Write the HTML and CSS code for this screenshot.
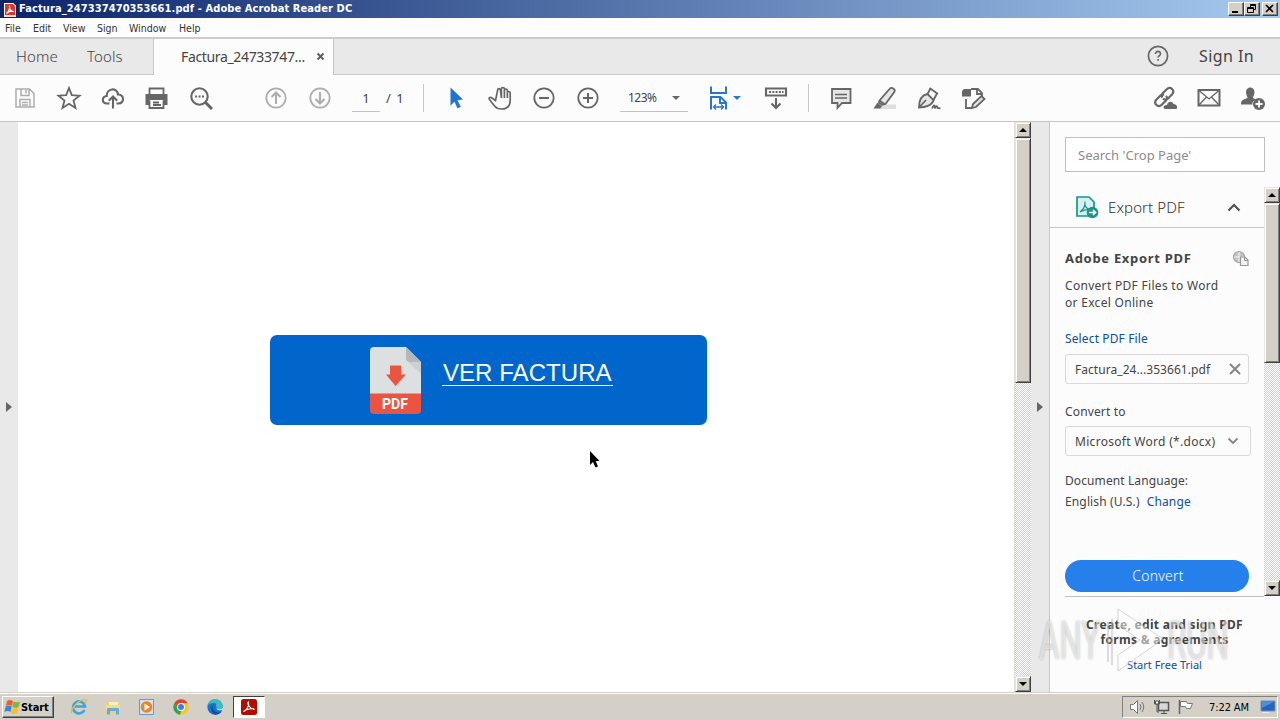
FILE: index.html
```html
<!DOCTYPE html>
<html lang="en">
  <head>
    <title>Factura_247337470353661.pdf - Adobe Acrobat Reader DC</title>
    <meta charset="utf-8">
    <link rel="stylesheet" href="styles.css">
  </head>
  <body>
    <header class="titlebar">
      <svg class="app-icon" width="12" height="15" viewBox="0 0 12 15"><path d="M0 1h9l3 3v11H0z" fill="#f6dcd8"/><path d="M0 1h9l3 3v8H0z" fill="#fff"/><path d="M1 2h8l2 2v9H1z" fill="#d8392f"/><path d="M2.500 11.500C5 9 6 6 5.500 3.500M5.500 6c.5 2 2 3.500 4.500 3.500C7 8.500 4.500 9.500 2.500 11.500" fill="none" stroke="#fff" stroke-width="1.100"/></svg>
      <span class="title">Factura_247337470353661.pdf - Adobe Acrobat Reader DC</span>
      <div class="win-buttons">
        <span class="btn3d"><svg width="14" height="12"><path d="M3 9h6" stroke="#000" stroke-width="2"/></svg></span>
        <span class="btn3d"><svg width="14" height="12"><path d="M5.500 4V1.500h5v5H8.500M5 2.500h6M2.500 4.500h6v5h-6zM2 5.500h7" fill="none" stroke="#000"/></svg></span>
        <span class="btn3d close"><svg width="14" height="12"><path d="M3 2l7 7M10 2L3 9" stroke="#000" stroke-width="1.600"/></svg></span>
      </div>
    </header>

    <nav class="menubar">
      <span class="m-file">File</span>
      <span class="m-edit">Edit</span>
      <span class="m-view">View</span>
      <span class="m-sign">Sign</span>
      <span class="m-window">Window</span>
      <span class="m-help">Help</span>
    </nav>

    <div class="tabs">
      <div class="tabs-left">
        <span class="t-home">Home</span>
        <span class="t-tools">Tools</span>
      </div>
      <div class="tab-active">
        <span class="tab-name">Factura_24733747...</span>
        <svg width="9" height="9"><path d="M1.500 1.500l6 6M7.500 1.500l-6 6" stroke="#606060" stroke-width="2"/></svg>
      </div>
      <div class="tabs-right">
        <svg width="22" height="22"><circle cx="11" cy="11" r="9.600" fill="none" stroke="#666" stroke-width="1.700"/><path d="M8.500 9c0-3.600 5.200-3.300 5 0-.1 1.600-2.400 1.600-2.400 3.600M11.100 14v1.800" fill="none" stroke="#666" stroke-width="1.700"/></svg>
        <span class="signin">Sign In</span>
      </div>
    </div>

    <div class="toolbar">
      <div class="group">
        <span class="tool light"><svg viewBox="0 0 26 26"><path d="M4 4h13.500L22 8.500V22H4zM9 4v6.500h8V4M14 5v3.500M8 22v-7.500h10V22M10 17.500h6M10 20h6" stroke-width="1.500"/></svg></span>
        <span class="tool"><svg viewBox="0 0 26 26"><path d="M13 3l2.800 7.200 7.700.5-6 4.800 2 7.500L13 18.800 6.500 23l2-7.500-6-4.800 7.700-.5z"/></svg></span>
        <span class="tool"><svg viewBox="0 0 26 26"><path class="bold" d="M9.500 18.500H7C1.500 18.500 1.500 11 6.700 11 6.500 3 17 2 18 9.500c6.500-.5 6.800 9 .5 9h-2M13 23.500V12M8.800 15.800L13 11.500l4.200 4.300"/></svg></span>
        <span class="tool"><svg viewBox="0 0 26 26"><path class="fill" d="M1.500 9h22v11h-4v-5h-14v5h-4z"/><path d="M5.500 9.500V3.500h14v6M5.500 15.500V23h14v-7.500M9 17.500h6M9 20h8"/></svg></span>
        <span class="tool"><svg viewBox="0 0 26 26"><circle class="bold" cx="11.500" cy="11.500" r="8.200"/><path d="M17.500 17.500L24 24" stroke-width="3"/><path d="M7 11.500h2M10.500 11.500h2M14 11.500h2" stroke-width="2"/></svg></span>
      </div>
      <div class="group nav">
        <span class="tool light"><svg viewBox="0 0 26 26"><circle cx="13" cy="13" r="9.700"/><path class="bold" d="M13 19V8M8.500 12L13 7.500l4.500 4.500"/></svg></span>
        <span class="tool light"><svg viewBox="0 0 26 26"><circle cx="13" cy="13" r="9.700"/><path class="bold" d="M13 7v11M8.500 14l4.500 4.500 4.500-4.500"/></svg></span>
      </div>
      <span class="page-input">1</span>
      <span class="page-total">/ 1</span>
      <i class="sep"></i>
      <div class="group pointer">
        <span class="tool"><svg viewBox="0 0 26 26"><path d="M7.500 2.500l12.500 12-5.700.7 3.500 6.600-3.300 1.700-3-6.800-4 4z" fill="#1f74d4" stroke="none"/></svg></span>
        <span class="tool"><svg viewBox="0 0 26 26"><path d="M8.500 15.500l-4.200-3c-1.500-.8-2.800.8-1.800 2l5 6.500c2 2.500 4 3 7 3 6 0 8.700-3.500 8.700-9V8c0-2-2.800-2-2.800 0v5V5.500c0-2-3-2-3 0V13 4c0-2-3-2-3 0v9l-1-8c-.3-2-3-1.700-2.800.3z" stroke-width="1.700"/></svg></span>
        <span class="tool"><svg viewBox="0 0 26 26"><circle cx="13" cy="13" r="9.700"/><path class="bold" d="M8 13h10"/></svg></span>
        <span class="tool"><svg viewBox="0 0 26 26"><circle cx="13" cy="13" r="9.700"/><path class="bold" d="M8 13h10M13 8v10"/></svg></span>
      </div>
      <div class="zoom"><span>123%</span><i class="caret"></i></div>
      <div class="fit">
        <svg width="20" height="26" viewBox="0 0 20 26" fill="none" stroke="#2a76c9" stroke-width="2"><path d="M2 1.500V8h15V1.500M2 24.500V12h9.500l5.500 5.500v7M11 12v6h6"/><path d="M4.500 22h10M7 19.500L4.500 22 7 24.500M12 19.500l2.500 2.500-2.500 2.500" stroke-width="1.400"/></svg>
        <i class="caret blue"></i>
      </div>
      <span class="tool dock"><svg viewBox="0 0 26 26"><path class="bold" d="M3 3.500h20v7H3zM13 13v10M8.500 18.500L13 23l4.500-4.500"/><path d="M6 7h2M9.300 7h2M12.600 7h2M15.900 7h2M19 7h1.500" stroke-width="2"/></svg></span>
      <i class="sep sep2"></i>
      <div class="group markup">
        <span class="tool"><svg viewBox="0 0 26 26"><path d="M4 4h18.500v14H14l-4.500 5v-5H4z" fill="#e6e6e6"/><path d="M7 9.500h12M7 13h12" stroke-width="1.300"/></svg></span>
        <span class="tool"><svg viewBox="0 0 26 26"><path d="M9 19.500h15V24H6z" fill="#dedede" stroke="none"/><path d="M7.500 15.500L17.500 4c2-2.500 6.500 0 4.800 3L13.500 19l-3.500.7-3-2zM7.500 15.500l5.500 4" fill="#e6e6e6"/><path class="fill" d="M5.500 17.500l4.500 4-2 2H1.500z"/></svg></span>
        <span class="tool"><svg viewBox="0 0 26 26"><path d="M3 22.500c0-6 1-12 8.500-13.500l6 6C16.500 20 10 22.500 3 22.500zM3 22.500l7-7.500" fill="#e6e6e6"/><path d="M11.500 9l3-5.500M17.500 15l3.500-6.500M13.500 3l8.500 6M16 23.500c2-5 3.500-3 2.500 0 2-4 3-2 3-.5l3 .3"/></svg></span>
        <span class="tool"><svg viewBox="0 0 26 26"><path d="M6 14v9h6M11 4h7l4 4v4M17 4v5h5"/><path class="fill" d="M2 6l2-2h7v7.500H2z"/><path d="M12 23l1-4 8.500-8 3 3-8.500 8z" fill="#e6e6e6"/></svg></span>
      </div>
      <div class="group share">
        <span class="tool"><svg viewBox="0 0 26 26"><path d="M10.500 12.500c-1.500-1.500-1-3 0-4l4-4c4-4 9 1 5.500 5l-4 4c-1.500 1.500-3.500 1.500-5 0M14 11c1.500 1.500 1 3.500 0 4.500l-4 4c-4 4-9-1-5.500-5l4-4c1-1 2.500-1 3.500-.5" stroke-width="2.200"/><path class="fill" d="M13 24c-2.500-.5-1.500-4.500 2-4 1-4 5.500-4 6.500-1 4 0 4.500 5 2.500 5z" /></svg></span>
        <span class="tool"><svg viewBox="0 0 26 26"><path d="M2.500 5h21v15.500h-21z" stroke-width="2"/><path d="M3 5.500l10 8.500 10-8.500M3 20l7.500-8M23 20l-7.500-8" stroke-width="1.300"/></svg></span>
        <span class="tool"><svg viewBox="0 0 26 26"><path class="fill" d="M6 7c0-6 8.500-6 8.500 0 0 3-1.500 4-1.500 6l3 1.500c-3 1-4 3-3.500 5H1c0-4 1-4.500 6.500-6.500C7.500 11 6 10 6 7z"/><circle cx="19" cy="19" r="6" fill="#666" stroke="none"/><path d="M15.500 19h7M19 15.500v7" stroke="#fff"/></svg></span>
      </div>
    </div>

    <main class="content">
      <div class="strip left"><i class="tri"></i></div>
      <section class="document">
        <div class="banner">
          <svg class="pdf" width="52" height="68" viewBox="0 0 52 68"><path d="M4 0h32l15 15v33H0V4q0-4 4-4z" fill="#dce0e1"/><path d="M36 0l15 15H40q-4 0-4-4z" fill="#b3b8ba"/><path d="M38 15h13v12z" fill="#ccd0d2"/><path d="M0 46.500h51V63q0 4-4 4H4q-4 0-4-4z" fill="#ea5440"/><path d="M20 18.500h11v9h5L25.500 39 16 27.500h4z" fill="#ea5440"/><text x="12" y="62" textLength="26" lengthAdjust="spacingAndGlyphs">PDF</text></svg>
          <a class="ver">VER FACTURA</a>
        </div>
        <svg class="cursor" width="12" height="18" viewBox="0 0 12 18"><path d="M1 0v14l3-3 2.500 5.500 2.500-1L6.700 10H10.500z" fill="#000"/></svg>
      </section>
      <div class="scrollbar doc-scroll">
        <span class="arrow"><i class="up"></i></span>
        <span class="thumb"></span>
        <span class="arrow end"><i class="down"></i></span>
      </div>
      <div class="strip right"><i class="tri"></i></div>

      <aside class="panel">
        <div class="search"><span>Search 'Crop Page'</span></div>
        <div class="panel-view">
          <div class="panel-body">
            <div class="export-head">
              <svg width="24" height="24" viewBox="0 0 24 24"><path d="M2 2h12l5 5v14H2z" fill="#d5f0ee" stroke="#16968c" stroke-width="1.700"/><path d="M5 17c4-3 5.500-6 5-10.500M10 10c1 3 3 4.500 6 4.500-4-.5-7 0-11 2.500" fill="none" stroke="#16968c" stroke-width="1.200"/><circle cx="17.500" cy="17.500" r="5.800" fill="#16968c"/><path d="M14 17.500h6.500M18 15l2.500 2.500L18 20" fill="none" stroke="#fff" stroke-width="1.700"/></svg>
              <span class="export-title">Export PDF</span>
              <svg class="chev" width="14" height="9"><path d="M1.500 7.500L7 2l5.500 5.500" fill="none" stroke="#505050" stroke-width="2.200"/></svg>
            </div>
            <div class="form">
              <div class="form-title"><b>Adobe Export PDF</b>
                <svg width="18" height="17"><circle cx="7" cy="7" r="5.500" fill="#c5c5c5" stroke="#a2a2a2" stroke-width="1.200"/><path d="M2 7h10M7 2v10" stroke="#f4f4f4" fill="none"/><path d="M8.500 7H13l3 3v5.500H8.500z" fill="#f2f2f2" stroke="#979797" stroke-width="1.200"/><path d="M12.500 7v3.500H16" fill="none" stroke="#979797"/></svg>
              </div>
              <p class="desc">Convert PDF Files to Word<br><span class="desc-2">or Excel Online</span></p>
              <p class="link select">Select PDF File</p>
              <div class="field file"><span class="v-file">Factura_24...353661.pdf</span><svg width="12" height="12"><path d="M1 1l10 10M11 1L1 11" stroke="#858585" stroke-width="2"/></svg></div>
              <p class="to">Convert to</p>
              <div class="field format"><span class="v-format">Microsoft Word (*.docx)</span><svg width="12" height="8"><path d="M1.500 1.500L6 6l4.500-4.500" fill="none" stroke="#858585" stroke-width="1.800"/></svg></div>
              <p class="lang">Document Language:</p>
              <p class="lang-value"><span>English (U.S.)</span><span class="link">Change</span></p>
              <div class="convert"><span>Convert</span></div>
            </div>
          </div>
          <div class="scrollbar panel-scroll">
            <span class="arrow"><i class="up"></i></span>
            <span class="thumb"></span>
            <span class="arrow end"><i class="down"></i></span>
          </div>
        </div>
        <div class="promo">
          <b class="promo-1">Create, edit and sign PDF</b>
          <b class="promo-2">forms &amp; agreements</b>
          <span class="link trial">Start Free Trial</span>
        </div>
      </aside>
    </main>

    <div class="watermark">
      <span class="wm-any">ANY</span>
      <svg width="60" height="68" viewBox="0 0 60 68"><path d="M11 2l45 30-45 32V48l22-15-22-15z" fill="#fff" fill-opacity=".5" stroke="#aaa" stroke-opacity=".5"/><path d="M1 15v40M5 12v46" stroke="#bbb" stroke-opacity=".5" stroke-width="2"/></svg>
      <span class="wm-run">RUN</span>
    </div>

    <footer class="taskbar">
      <div class="start btn3d">
        <svg width="17" height="16" viewBox="0 0 17 16"><path d="M3 2q3-2 6 0L8 7q-3-2-6 0z" fill="#e8612c"/><path d="M9.500 2.500q3 1.500 6.500 0L14.500 8q-3 1.500-6 0z" fill="#79b643"/><path d="M1.700 7.500q3-2 6 0l-1.200 5.500q-3-2-6 0z" fill="#3c86d0"/><path d="M8.300 8.500q3 1.500 6.200 0l-1.200 5.500q-3 1.500-6.300 0z" fill="#f5bf2c"/></svg>
        <b>Start</b>
      </div>
      <div class="apps">
        <svg width="18" height="18"><path d="M14.500 12A6 6 0 1 1 15 8.500H5" fill="none" stroke="#3aa6df" stroke-width="2.600"/><path d="M2 15C-1 12 10 0 16 2c1 1 0 2.500-1 4" fill="none" stroke="#e8b93c" stroke-width="1.300"/></svg>
        <svg width="18" height="18"><path d="M2 3h5l1 2h7v10H2z" fill="#eccf74"/><path d="M5 4h9v5H5z" fill="#f9f0bd"/><path d="M2 7h14v5H2z" fill="#f4dc8a"/><path d="M3 16.500V11q0-1 1-1h10q1 0 1 1v5.500h-3V13H6v3.500z" fill="#65acd8"/></svg>
        <svg width="18" height="18"><path d="M1.500 1.500h14v15h-14z" fill="#cfe3f4" stroke="#6c99c8"/><circle cx="8.500" cy="9" r="5.800" fill="#ef8222"/><path d="M6.500 5.500L12 9l-5.500 3.500z" fill="#fff"/></svg>
        <svg width="18" height="18"><circle cx="9" cy="9" r="7.700" fill="#f6c72d"/><path d="M2.300 5.200A7.700 7.700 0 0 1 15.700 5.200H9L5.700 11z" fill="#df4334"/><path d="M2.300 5.200L5.700 11 9 13l-1 3.700A7.700 7.700 0 0 1 2.300 5.200z" fill="#36a052"/><circle cx="9" cy="9" r="3.900" fill="#fff"/><circle cx="9" cy="9" r="3" fill="#3b7de0"/></svg>
        <svg width="18" height="18"><circle cx="9" cy="9" r="7.700" fill="#1277c9"/><path d="M1.500 8C3-1 16-1 16.700 8c0 4-6 4-6 2 1-1 1-5-3.200-5C4.500 5 2 6.500 1.500 8z" fill="#35bfc0"/><path d="M9.500 5C6 7 6 12 10 14c2 1 4 .5 6-1-1.500 2.500-4 3.700-7 3.700C5 15 3 9 9.500 5z" fill="#164c9b"/><path d="M10.500 10c1-1 1-3-.5-4 2 4-1 4 2 6 2 .7 4 0 5-1v-1c-2 1.500-6 1.500-6.500 0z" fill="#d8e8ee"/></svg>
        <span class="running"><svg width="16" height="16"><rect width="16" height="16" rx="2.500" fill="#b30b00"/><path d="M2.500 12.500c3-1 6-6 5-9.500-1.500 1 0 6 5.500 7.500 1.500-1.500-7-1-10.500 2z" fill="none" stroke="#fff" stroke-width="1.100"/></svg></span>
      </div>
      <div class="tray">
        <svg width="18" height="16" fill="none" stroke="#777"><path d="M1.500 5.500h3l4-4v13l-4-4h-3z" fill="#fff"/><path d="M11 5q2 3 0 6M13 3q3.500 5 0 10"/></svg>
        <svg width="18" height="16" fill="none" stroke="#555"><path d="M5.500 3.500h10v8h-10z" fill="#d8d8d8" stroke-width="1.500"/><path d="M8 14.500h6M11 12v2M1.500 1v4h5V1M4 5v8h2"/><path d="M2.500 2h3v3h-3z" fill="#fff"/></svg>
        <svg width="18" height="16"><path d="M2.500 1v14" stroke="#666" stroke-width="1.500"/><path d="M3.500 2.500h6l1 2h5l-2 5h-4l-1-2h-5z" fill="#fff" stroke="#777"/></svg>
        <span class="clock">7:22 AM</span>
        <svg class="desk" width="16" height="14"><path d="M1 1h14v10H1z" fill="#2a63b8" stroke="#7593bd"/><path d="M1.500 1.500h13L2 8z" fill="#4b90df"/><path d="M2 12.500h7" stroke="#e5eefa"/></svg>
      </div>
    </footer>
  </body>
</html>
```

FILE: styles.css
```css
* {
  box-sizing: border-box;
}
body {
  margin: 0;
  width: 1280px;
  height: 720px;
  overflow: hidden;
  display: flex;
  flex-direction: column;
  position: relative;
  background: #fcfcfc;
  color: #444;
  font-family: "Noto Sans", "Open Sans", sans-serif;
  font-size: 12px;
  white-space: nowrap;
}
p {
  margin: 0;
}
svg {
  display: block;
  flex: none;
}
i {
  display: block;
}

/* title bar */
.titlebar {
  height: 18px;
  flex: none;
  display: flex;
  align-items: center;
  padding: 0 2px 0 4px;
  background: linear-gradient(90deg, #0a246a, #a6caf0);
}
.title {
  margin-left: 3px;
  color: #fff;
  font: bold 11px/18px "DejaVu Sans Condensed", "DejaVu Sans", sans-serif;
  font-stretch: condensed;
  letter-spacing: 0.1px;
}
.win-buttons {
  margin-left: auto;
  display: flex;
}
.btn3d {
  background: #d4d0c8;
  border: 1px solid;
  border-color: #fff #404040 #404040 #fff;
  box-shadow: inset -1px -1px 0 #808080;
}
.win-buttons .btn3d {
  width: 16px;
  height: 14px;
}
.win-buttons .close {
  margin-left: 2px;
}

/* menu */
.menubar {
  height: 21px;
  flex: none;
  display: flex;
  padding: 0 0 0 5px;
  border-bottom: 2px solid #ccc;
  background: #fdfdfd;
  color: #333;
  font: 10.5px/20px "DejaVu Sans Condensed", "DejaVu Sans", sans-serif;
  font-stretch: condensed;
}
.menubar span {
  letter-spacing: 0;
}
.m-file { width: 28px; }
.m-edit { width: 30px; }
.m-view { width: 34px; }
.m-sign { width: 32px; }
.m-window { width: 50px; }

/* tabs */
.tabs {
  height: 36px;
  flex: none;
  display: flex;
  background: #e9e9e9;
  font-size: 15px;
  line-height: 35px;
}
.tabs-left {
  width: 154px;
  display: flex;
  padding-left: 16px;
  border-right: 1px solid #c6c6c6;
  border-bottom: 1px solid #c6c6c6;
}
.t-home {
  width: 71px;
}
.t-home, .t-tools {
  letter-spacing: 0.1px;
  font-weight: 300;
}
.tab-active {
  width: 179px;
  display: flex;
  align-items: center;
  background: #fcfcfc;
  padding: 0 0 1px 27px;
  font-size: 14px;
}
.tab-name {
  width: 135px;
  letter-spacing: -0.35px;
}
.tabs-right {
  flex: 1;
  display: flex;
  align-items: center;
  justify-content: flex-end;
  padding: 0 26px 1px 0;
  border-left: 1px solid #c6c6c6;
  border-bottom: 1px solid #c6c6c6;
}
.signin {
  margin-left: 30px;
  font-size: 16px;
  letter-spacing: 0.4px;
}

/* toolbar */
.toolbar {
  height: 47px;
  flex: none;
  display: flex;
  align-items: center;
  padding: 0 5px 0 3px;
  border-bottom: 1px solid #c6c6c6;
}
.group {
  display: flex;
}
.tool {
  width: 44px;
  display: flex;
  justify-content: center;
}
.tool svg {
  width: 26px;
  height: 26px;
  fill: none;
  stroke: #666;
  stroke-width: 1.8;
}
.tool.light svg {
  stroke: #adadad;
}
.tool .bold {
  stroke-width: 2.1;
}
.tool .fill {
  fill: #666;
  stroke: none;
}
.nav {
  margin-left: 31px;
}
.page-input {
  width: 28px;
  height: 28px;
  margin-left: 10px;
  border-bottom: 1px solid #c2c2c2;
  text-align: center;
  line-height: 28px;
  font-size: 13px;
}
.page-total {
  width: 37px;
  padding-left: 6px;
  letter-spacing: 1px;
  font-size: 13px;
}
.sep {
  width: 1px;
  height: 28px;
  margin-left: 6px;
  background: #c8c8c8;
}
.pointer {
  margin-left: 10px;
}
.zoom {
  width: 68px;
  height: 28px;
  margin-left: 10px;
  display: flex;
  align-items: center;
  padding-left: 8px;
  border-bottom: 1px solid #c2c2c2;
}
.zoom span {
  width: 44px;
  letter-spacing: -0.5px;
}
.caret {
  border: 4px solid transparent;
  border-top-color: #666;
  border-bottom: 0;
}
.caret.blue {
  margin-left: 4px;
  border-top-color: #2a76c9;
}
.fit {
  width: 45px;
  margin-left: 21px;
  display: flex;
  align-items: center;
}
.sep2 {
  margin-left: 10px;
}
.markup {
  margin-left: 10px;
}
.share {
  margin-left: auto;
}

/* content */
.content {
  height: 570px;
  flex: none;
  display: flex;
}
.strip {
  width: 18px;
  display: flex;
  align-items: center;
  justify-content: center;
  background: #e9e9e9;
}
.tri {
  border: 5px solid transparent;
  border-left: 6px solid #666;
  border-right: 0;
}
.document {
  width: 996px;
  position: relative;
  padding: 213px 0 0 252px;
  background: #fff;
}
.banner {
  width: 437px;
  height: 90px;
  display: flex;
  padding: 12px 0 0 100px;
  border-radius: 7px;
  background: #0066cc;
}
.pdf text {
  fill: #fff;
  font: bold 15.5px "Roboto", sans-serif;
}
.ver {
  height: 27px;
  margin: 12px 0 0 20px;
  padding: 0 1px;
  border-bottom: 1px solid #fff;
  color: #fff;
  font: 24px/28px "Liberation Sans", Arial, sans-serif;
  letter-spacing: 0.05px;
}
.cursor {
  position: absolute;
  left: 571px;
  top: 329px;
}

/* classic scrollbars */
.scrollbar {
  display: flex;
  flex-direction: column;
  background: repeating-conic-gradient(#fff 0 25%, #d4d0c8 0 50%) 0 0 / 2px 2px;
}
.arrow, .thumb {
  flex: none;
  background: #d4d0c8;
  border: 1px solid;
  border-color: #e8e6e2 #404040 #404040 #e8e6e2;
  box-shadow: inset 1px 1px 0 #fff, inset -1px -1px 0 #808080;
}
.arrow {
  height: 16px;
  display: flex;
  align-items: center;
  justify-content: center;
  padding-right: 1px;
}
.end {
  margin-top: auto;
}
.up, .down {
  border: 4px solid transparent;
}
.up {
  border-bottom-color: #000;
  border-top: 0;
}
.down {
  border-top-color: #000;
  border-bottom: 0;
}
.doc-scroll {
  width: 17px;
  border-left: 1px solid #e0ddd8;
}
.doc-scroll .thumb {
  height: 245px;
}

/* tool panel */
.panel {
  width: 231px;
  border-left: 1px solid #c6c6c6;
  padding-top: 15px;
}
.search {
  width: 200px;
  height: 35px;
  margin-left: 15px;
  padding-left: 12px;
  border: 1px solid #c0c0c0;
  background: #fff;
  color: #8c8c8c;
  font-size: 13px;
  line-height: 35px;
}
.panel-view {
  height: 409px;
  margin-top: 15px;
  display: flex;
}
.panel-body {
  width: 214px;
}
.export-head {
  height: 41px;
  display: flex;
  align-items: center;
  padding-left: 25px;
  border-bottom: 1px solid #c8c8c8;
}
.export-title {
  width: 119px;
  margin-left: 9px;
  font-size: 15px;
  font-weight: 300;
  color: #333;
  letter-spacing: 0.1px;
}
.form {
  height: 369px;
  margin-left: 15px;
  padding-top: 20px;
  border-bottom: 1px solid #c0c0c0;
}
.form-title {
  height: 20px;
  display: flex;
  align-items: center;
  font-size: 13px;
}
.form-title b {
  width: 167px;
  letter-spacing: 0.7px;
}
.desc {
  margin-top: 9px;
  line-height: 17px;
  letter-spacing: 0.3px;
}
.link {
  color: #0d4f98;
}
.select {
  margin-top: 19px;
  line-height: 17px;
  letter-spacing: 0.13px;
}
.field {
  height: 30px;
  display: flex;
  align-items: center;
  justify-content: space-between;
  border: 1px solid #d9d9d9;
  border-radius: 3px;
  padding: 0 7px 0 9px;
}
.file {
  width: 184px;
  margin-top: 7px;
}
.to {
  margin-top: 19px;
  line-height: 17px;
  letter-spacing: 0.15px;
}
.format {
  width: 186px;
  margin-top: 6px;
  padding-right: 11px;
}
.v-file {
  letter-spacing: 0.05px;
}
.v-format {
  letter-spacing: 0.3px;
}
.lang {
  margin-top: 16px;
  line-height: 17px;
  letter-spacing: 0.1px;
}
.lang-value {
  display: flex;
  gap: 7px;
  margin-top: 4px;
  line-height: 17px;
  letter-spacing: 0.14px;
}
.convert {
  width: 184px;
  height: 32px;
  margin-top: 50px;
  padding-left: 2px;
  border-radius: 16px;
  background: #2680eb;
  color: #fff;
  font-size: 14px;
  font-weight: 300;
  letter-spacing: 0.2px;
  line-height: 32px;
  text-align: center;
}
.panel-scroll {
  width: 16px;
}
.panel-scroll .thumb {
  height: 160px;
}
.promo {
  display: flex;
  flex-direction: column;
  align-items: center;
  padding: 21px 1px 0 0;
  line-height: 15px;
}
.promo b {
  letter-spacing: 0.3px;
}
.trial {
  margin-top: 10px;
  font-size: 11px;
}

/* recorder watermark over the window */
.watermark {
  position: absolute;
  left: 1039px;
  top: 607px;
  display: flex;
  align-items: center;
  color: rgba(255, 255, 255, 0.55);
  font: 54px/68px "Roboto", sans-serif;
  text-shadow: 0 0 3px rgba(0, 0, 0, 0.28);
}
.wm-any, .wm-run {
  width: 68px;
  transform: scaleX(0.58);
  transform-origin: 0 50%;
}

/* taskbar */
.taskbar {
  height: 28px;
  flex: none;
  display: flex;
  align-items: center;
  padding: 1px 2px 0;
  border-top: 1px solid #d4d0c8;
  box-shadow: inset 0 1px 0 #fff;
  background: #d4d0c8;
  color: #000;
  font: 11px "DejaVu Sans Condensed", "DejaVu Sans", sans-serif;
  font-stretch: condensed;
}
.start {
  width: 52px;
  height: 22px;
  display: flex;
  align-items: center;
  padding-left: 1px;
}
.start b {
  letter-spacing: -0.1px;
}
.apps {
  display: flex;
  align-items: center;
  gap: 16px;
  margin-left: 16px;
}
.running {
  width: 32px;
  height: 22px;
  margin-left: -7px;
  display: flex;
  align-items: center;
  justify-content: center;
  background: #fff;
  border: 1px solid;
  border-color: #404040 #fff #fff #404040;
}
.tray {
  width: 156px;
  height: 22px;
  display: flex;
  align-items: center;
  gap: 6px;
  margin-left: auto;
  padding-left: 6px;
  border: 1px solid;
  border-color: #808080 #fff #fff #808080;
}
.clock {
  width: 43px;
  margin-left: 8px;
  letter-spacing: -0.1px;
}
.desk {
  margin-left: 2px;
}
```
